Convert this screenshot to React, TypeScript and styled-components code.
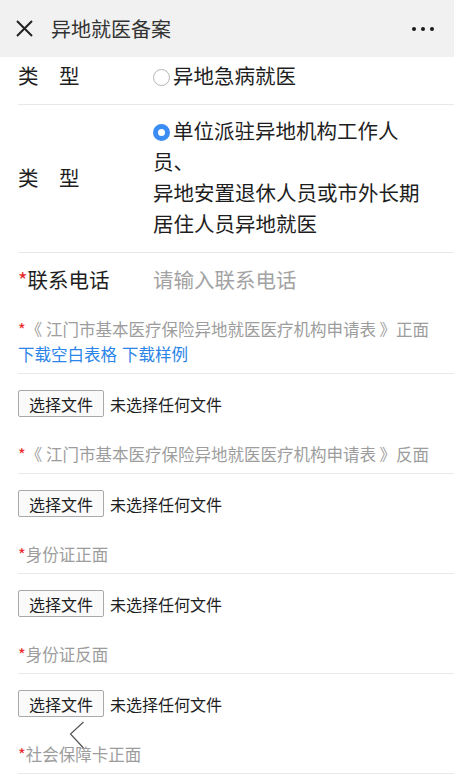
import React from "react";
import styled, { createGlobalStyle } from "styled-components";

const GlobalStyle = createGlobalStyle`
  html, body {
    margin: 0;
    padding: 0;
    background: #ffffff;
    font-family: "Noto Sans CJK SC", "Noto Sans", sans-serif;
  }
`;

const Page = styled.div`
  position: relative;
  width: 454px;
  min-height: 779px;
  overflow: hidden;
`;

const Header = styled.div`
  display: flex;
  align-items: center;
  height: 57px;
  padding: 0 20px 0 16px;
  background: #f1f1f1;
  box-sizing: border-box;
`;

const Title = styled.div`
  margin-left: 18px;
  font-size: 20px;
  color: #333;
  line-height: 1;
`;

const Dots = styled.div`
  margin-left: auto;
  display: flex;
  gap: 5px;
`;

const Dot = styled.span`
  width: 4px;
  height: 4px;
  border-radius: 50%;
  background: #1a1a1a;
`;

const Form = styled.div`
  padding-left: 18px;
`;

const Row = styled.div<{ $pt: number; $pb: number; $line?: boolean }>`
  display: flex;
  align-items: center;
  padding: ${(p) => p.$pt}px 0 ${(p) => p.$pb}px;
  border-bottom: ${(p) => (p.$line ? "1px solid #e8e8e8" : "none")};
  font-size: 20.5px;
  line-height: 30px;
  color: #1e1e1e;
`;

const Label = styled.div`
  width: 135px;
  flex-shrink: 0;
  white-space: nowrap;
`;

const Value = styled.div<{ $lh?: number }>`
  white-space: nowrap;
  line-height: ${(p) => p.$lh ?? 30}px;
`;

const Placeholder = styled.span`
  color: #a3a3a3;
`;

const Star = styled.span`
  color: #e82a2a;
`;

const Radio = styled.span<{ $checked?: boolean }>`
  display: inline-block;
  box-sizing: border-box;
  width: 17px;
  height: 17px;
  margin-right: 3px;
  border-radius: 50%;
  vertical-align: -2px;
  background: #fff;
  border: ${(p) => (p.$checked ? "5px solid #3b8df3" : "1px solid #b3b3b3")};
`;

const Section = styled.div`
  padding: 13px 0 6px;
  border-bottom: 1px solid #e8e8e8;
  font-size: 16.5px;
  line-height: 25px;
  color: #9d9d9d;
  white-space: nowrap;
`;

const Links = styled.div`
  display: flex;
  gap: 5px;
  color: #2b84e8;
`;

const FileRow = styled.div`
  display: flex;
  align-items: center;
  gap: 6px;
  padding: 16px 0 12px;
  font-size: 16px;
  color: #1e1e1e;
`;

const FileButton = styled.button`
  box-sizing: border-box;
  height: 27px;
  padding: 0 10px;
  border: 1px solid #a9a9a9;
  border-radius: 2px;
  background: #fafafa;
  font-family: inherit;
  font-size: 16px;
  color: #1e1e1e;
  line-height: 1;
`;

const BackHint = styled.svg`
  position: absolute;
  left: 69px;
  top: 720px;
`;

const uploads = [
  { title: "《 江门市基本医疗保险异地就医医疗机构申请表 》正面", links: true },
  { title: "《 江门市基本医疗保险异地就医医疗机构申请表 》反面" },
  { title: "身份证正面" },
  { title: "身份证反面" },
];

export default function App() {
  return (
    <Page>
      <GlobalStyle />
      <Header>
        <svg width="17" height="17" viewBox="0 0 17 17">
          <path d="M1 1 L16 16 M16 1 L1 16" stroke="#222" strokeWidth="2" />
        </svg>
        <Title>异地就医备案</Title>
        <Dots>
          <Dot />
          <Dot />
          <Dot />
        </Dots>
      </Header>

      <Form>
        <Row $pt={3} $pb={14} $line>
          <Label>类　型</Label>
          <Value>
            <Radio />
            异地急病就医
          </Value>
        </Row>
        <Row $pt={10} $pb={13} $line>
          <Label>类　型</Label>
          <Value $lh={31}>
            <Radio $checked />
            单位派驻异地机构工作人
            <br />
            员、
            <br />
            异地安置退休人员或市外长期
            <br />
            居住人员异地就医
          </Value>
        </Row>
        <Row $pt={11} $pb={10}>
          <Label>
            <Star>*</Star>联系电话
          </Label>
          <Placeholder>请输入联系电话</Placeholder>
        </Row>

        {uploads.map((u) => (
          <React.Fragment key={u.title}>
            <Section>
              <Star>*</Star>
              {u.title}
              {u.links && (
                <Links>
                  <span>下载空白表格</span>
                  <span>下载样例</span>
                </Links>
              )}
            </Section>
            <FileRow>
              <FileButton>选择文件</FileButton>
              <span>未选择任何文件</span>
            </FileRow>
          </React.Fragment>
        ))}

        <Section>
          <Star>*</Star>社会保障卡正面
        </Section>
      </Form>

      <BackHint width="16" height="30" viewBox="0 0 16 30">
        <polyline points="14.5,2 1.5,14 14.5,28" fill="none" stroke="#555" strokeWidth="1.2" />
      </BackHint>
    </Page>
  );
}
